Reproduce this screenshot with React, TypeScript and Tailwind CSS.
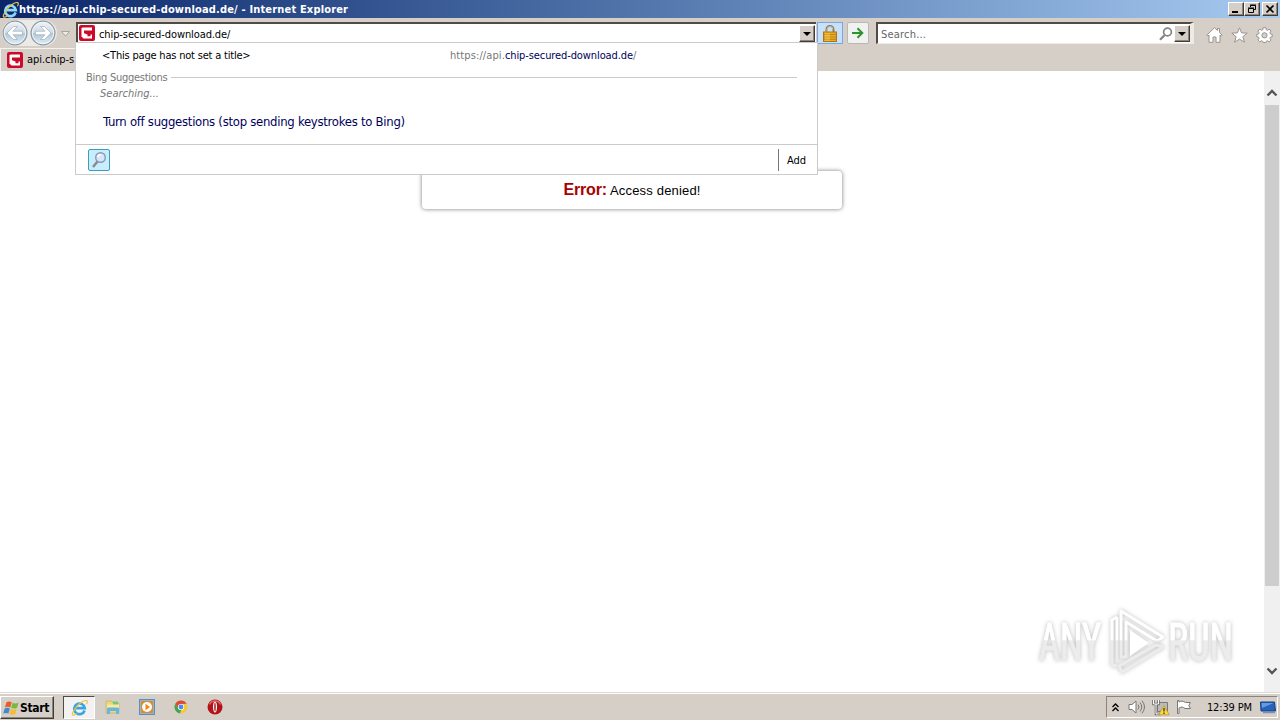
import type { ReactNode } from "react";

const ui = "font-['DejaVu_Sans_Condensed','DejaVu_Sans',sans-serif] [font-stretch:condensed]";
const raised =
  "bg-[#d6cfc8] border border-t-white border-l-white border-r-[#403c38] border-b-[#403c38] shadow-[inset_-1px_-1px_0_#8c857e]";

function IeLogo({ size, color = "#3aa5e4" }: { size: number; color?: string }) {
  return (
    <svg width={size} height={size} viewBox="0 0 16 16" fill="none" className="shrink-0">
      <path d="M12.8 10.8A5 5 0 1 1 13 8.6H4.5" stroke={color} strokeWidth="2.5" />
      <path d="M4 9C7 4.5 12 .7 14.7 1.5c1 .4.7 2-.2 3.4" stroke="#f0c43c" strokeWidth="1.1" />
      <path d="M4.2 8.7C1.4 12.2.4 15 2 15.2c1 .1 2.4-.6 3.7-1.5" stroke="#f0c43c" strokeWidth="1.1" />
    </svg>
  );
}

function ChipIcon() {
  return (
    <svg width="16" height="16" viewBox="0 0 16 16" className="shrink-0">
      <rect width="16" height="16" rx="2" fill="#cc0a28" />
      <path d="M3.5 2.500H13v11H4.5l-2-2v-8z" fill="#fff" />
      <path d="M5 5.500h8.500v4h-2v1.800H8.500V9.500L5 8.300z" fill="#cc0a28" />
    </svg>
  );
}

function NavArrow({ flip = false }: { flip?: boolean }) {
  return (
    <svg width="26" height="26" viewBox="0 0 26 26" className="shrink-0">
      <defs>
        <linearGradient id="orb" x1="0" y1="0" x2="0" y2="1">
          <stop offset="0" stopColor="#f1f5f8" />
          <stop offset=".48" stopColor="#cfdae4" />
          <stop offset=".52" stopColor="#b3c5d4" />
          <stop offset="1" stopColor="#dff2f7" />
        </linearGradient>
      </defs>
      <circle cx="13" cy="13" r="11.9" fill="url(#orb)" stroke="#8798a8" strokeWidth="1.2" />
      <circle cx="13" cy="13" r="10.7" fill="none" stroke="#f2f6f9" />
      <path
        transform={flip ? "translate(26 0) scale(-1 1)" : undefined}
        d="M5 13l6.500-6.500h4L11 11.200h9.500v3.600H11l4.500 4.700h-4z"
        fill="#fff"
        stroke="#9dadbc"
        strokeWidth=".7"
      />
    </svg>
  );
}

function DropButton() {
  return (
    <div className={`flex h-[17px] w-4 shrink-0 items-center justify-center ${raised}`}>
      <svg width="8" height="4" viewBox="0 0 8 4">
        <path d="M0 0h8L4 4z" fill="#000" />
      </svg>
    </div>
  );
}

function WindowButton({ children }: { children: ReactNode }) {
  return (
    <div className={`flex h-[14px] w-4 items-center justify-center ${raised}`}>
      <svg width="12" height="10" viewBox="0 0 12 10" fill="none" stroke="#000">
        {children}
      </svg>
    </div>
  );
}

function TitleBar() {
  return (
    <div className="flex h-[18px] shrink-0 items-center bg-linear-to-r from-[#0b2569] to-[#a6caf0] pr-[2px] pl-[2px]">
      <IeLogo size={17} color="#8bd8fa" />
      <div className="w-[340px] pt-[2px] text-[11px] font-bold tracking-[0.17px] whitespace-nowrap text-white">
        https://api.chip-secured-download.de/ - Internet Explorer
      </div>
      <div className="ml-auto flex">
        <WindowButton>
          <path d="M2 8h6" strokeWidth="2" />
        </WindowButton>
        <WindowButton>
          <path d="M4.5 3V1.500h5v4H8M4 1h6" />
          <path d="M2.500 4.500h5v4h-5zM2 4h6" />
        </WindowButton>
        <div className="ml-[2px]">
          <WindowButton>
            <path d="M2.500 1.500l7 7M9.500 1.500l-7 7" strokeWidth="1.7" />
          </WindowButton>
        </div>
      </div>
    </div>
  );
}

function NavBar() {
  return (
    <div className="flex h-[30px] shrink-0 items-start pt-[4px]">
      <div className="mt-[-2px] ml-[2px] flex w-[55px] gap-[2px] rounded-full bg-[#ece9e6]">
        <NavArrow />
        <NavArrow flip />
      </div>
      <svg width="9" height="6" viewBox="0 0 9 6" className="mt-[9px] ml-1 shrink-0">
        <path d="M.5.500h8L4.500 5z" fill="#eeebe8" stroke="#aaa49d" />
      </svg>
      <div className="ml-[6px] flex h-[22px] w-[740px] items-start border-t-2 border-l-2 border-[#514b46] bg-white pt-[1px] pr-[1px] pl-[1px]">
        <ChipIcon />
        <div className="mt-[1px] ml-[4px] text-[11px] leading-[17px] tracking-[-0.1px] text-black">
          chip-secured-download.de/
        </div>
        <div className="ml-auto">
          <DropButton />
        </div>
      </div>
      <div className="ml-[1px] flex h-[22px] w-[26px] items-center justify-center border border-[#77a7e5] bg-[#c9e0fb]">
        <svg width="14" height="17" viewBox="0 0 14 17">
          <path d="M3.500 8V4.500a3.500 3.500 0 0 1 7 0V8" fill="none" stroke="#8b7c52" strokeWidth="2" />
          <path d="M4 8V4.500a3 3 0 0 1 6 0" fill="none" stroke="#e7dfc2" strokeWidth=".7" />
          <rect x=".5" y="7" width="13" height="9.500" fill="#e9ac22" stroke="#ad7510" />
          <path d="M1 9.500h12M1 12h12M1 14.300h12" stroke="#bd8416" />
          <path d="M2 8h5v8H2z" fill="#ffd65b" opacity=".35" />
        </svg>
      </div>
      <div className="ml-[4px] flex h-[22px] w-[22px] items-center justify-center rounded-[2px] border border-[#bab8b7] bg-[#f1f1f1]">
        <svg width="12" height="12" viewBox="0 0 12 12" fill="none" stroke="#2a952c" strokeWidth="2">
          <path d="M0 6h10M5.500 1.200L10.300 6l-4.800 4.800" />
        </svg>
      </div>
      <div className="ml-[7px] flex h-[22px] w-[318px] items-start border-t-2 border-r-4 border-b border-l-2 border-t-[#514b46] border-r-[#eeeae6] border-b-[#eeeae6] border-l-[#514b46] bg-white pt-[1px] pl-[3px]">
        <div className="mt-[1px] text-[11px] leading-[17px] tracking-[0.2px] text-[#666]">Search...</div>
        <svg width="14" height="14" viewBox="0 0 14 14" fill="none" stroke="#858585" className="mt-[2px] ml-auto">
          <circle cx="8.500" cy="5" r="3.900" strokeWidth="1.700" />
          <path d="M5.500 8.200L1 12.800" strokeWidth="2.200" />
        </svg>
        <div className="ml-[1px]">
          <DropButton />
        </div>
      </div>
      <div className="mt-[5px] ml-[12px] flex gap-[8px]">
        <svg width="17" height="16" viewBox="0 0 17 16" fill="#fff" stroke="#99948f">
          <path d="M.800 8.200L8.500.700l3 2.800V1.500h2v4l2.800 2.700-1 1-1.300-1.100v7.200h-4V10h-3v5.300H3V8.100L1.800 9.200z" />
        </svg>
        <svg width="17" height="16" viewBox="0 0 17 16" fill="#fff" stroke="#99948f">
          <path d="M8.500.800l2.100 5.100 5.600.200-4.300 3.600 1.500 5.500-4.900-3.100-4.900 3.100 1.500-5.500L.800 6.100l5.600-.200z" />
        </svg>
        <svg width="17" height="16" viewBox="0 0 16 16" fill="#fff" stroke="#99948f">
          <path d="M6.600.700h2.800l.3 2 1.300.600 1.700-1.200 1.900 1.900-1.200 1.700.6 1.300 1.700.2v2.600l-1.700.3-.6 1.300 1.200 1.600-1.900 1.900-1.700-1.200-1.300.600-.3 1.200H6.600l-.3-1.200-1.300-.6-1.700 1.200L1.400 13l1.200-1.600-.6-1.300-1.700-.3V7.200L2 7l.600-1.300L1.400 4l1.900-1.900L5 3.300l1.300-.6z" />
          <circle cx="8" cy="8.300" r="2.600" fill="#d6cfc8" />
        </svg>
      </div>
    </div>
  );
}

function SuggestionPopup() {
  return (
    <div className="absolute top-[42px] left-[75px] flex h-[133px] w-[743px] flex-col border border-[#cbcbcb] bg-white">
      <div className="flex h-[25px] items-center pt-[1px] pl-[26px] text-[11px]">
        <div className="w-[348px] tracking-[-0.2px] text-black">&lt;This page has not set a title&gt;</div>
        <div className="text-[#777]">
          <span className="tracking-[0.1px]">https://api.</span>
          <span className="tracking-[-0.1px] text-[#00005c]">chip-secured-download.de</span>/
        </div>
      </div>
      <div className="flex h-[18px] items-center pr-[20px] pl-[10px] text-[11px] text-[#777]">
        <div className="w-[85px] pt-[2px] tracking-[-0.27px] whitespace-nowrap">Bing Suggestions</div>
        <div className="h-px flex-1 bg-[#cbcbcb]" />
      </div>
      <div className="mt-[1px] h-[14px] pl-[24px] text-[11px] leading-[14px] text-[#777] italic">Searching...</div>
      <div className="mt-[11px] pl-[27px] text-[13px] leading-[19px] tracking-[-0.28px] text-[#00005c]">
        Turn off suggestions (stop sending keystrokes to Bing)
      </div>
      <div className="mt-auto flex h-[30px] items-center border-t border-[#cbcbcb] pl-[12px]">
        <div className="flex h-[22px] w-[22px] items-center justify-center rounded-[2px] border border-[#3b9bc5] bg-[#c8edfc]">
          <svg width="16" height="18" viewBox="0 0 16 18" fill="none">
            <path d="M6.500 10.500L2 16" stroke="#858b91" strokeWidth="2.500" />
            <circle cx="9.500" cy="6.500" r="4.800" fill="#d6e6fb" stroke="#8999b2" strokeWidth="1.400" />
            <path d="M6.800 6a3 3 0 0 1 3-2.500" stroke="#fff" strokeWidth="1.500" />
          </svg>
        </div>
        <div className="ml-auto flex h-[22px] w-[39px] items-center border-l border-[#777] pt-[3px] pl-[8px] text-[11px] text-black">
          Add
        </div>
      </div>
    </div>
  );
}

function Watermark() {
  return (
    <svg
      width="210"
      height="76"
      viewBox="0 0 210 76"
      className="absolute right-[39px] bottom-[14px] overflow-visible drop-shadow-[0_0_2px_#bbbbbb]"
    >
      <defs>
        <linearGradient id="fade" gradientUnits="userSpaceOnUse" x1="0" y1="0" x2="0" y2="76">
          <stop offset=".5" stopColor="#fff" />
          <stop offset=".51" stopColor="#ececec" />
        </linearGradient>
      </defs>
      <g
        fill="url(#fade)"
        stroke="url(#fade)"
        strokeWidth="1.200"
        className="font-['Liberation_Sans_Narrow','Roboto',sans-serif] text-[52px] leading-none"
      >
        <text x="8" y="57.500" textLength="62" lengthAdjust="spacingAndGlyphs">ANY</text>
        <text x="137" y="57.500" textLength="65" lengthAdjust="spacingAndGlyphs">RUN</text>
      </g>
      <g fill="none" stroke="url(#fade)" strokeWidth="3" strokeLinejoin="round">
        <path d="M90 55V9l42 26-6 4-31-19v35z" />
        <path d="M86 15l-5 3v45l5 1M86 15v44" />
        <path d="M88 64l37-21 7 2-41 25z" />
        <path d="M99 28v26l19-13z" fill="#fff" stroke="none" />
      </g>
    </svg>
  );
}

function Page() {
  return (
    <div className="relative flex min-h-0 flex-1 justify-between bg-white">
      <div className="flex flex-1 justify-center pt-[100px]">
        <div className="h-[38px] w-[420px] rounded-[4px] bg-white pt-[8px] text-center font-['Liberation_Sans',Arial,sans-serif] text-[13px] leading-[22px] tracking-[0.17px] text-black shadow-[0_0_4px_#777]">
          <span className="text-[16px] font-bold tracking-[-0.15px] text-[#a90000]">Error:</span> Access denied!
        </div>
      </div>
      <div className="flex w-4 shrink-0 flex-col items-center bg-[#f0f0f0]">
        <svg width="12" height="8" viewBox="0 0 12 8" className="mt-[18px]" fill="none" stroke="#555" strokeWidth="2.300">
          <path d="M1.500 6.500L6 2l4.500 4.500" />
        </svg>
        <div className="mt-[8px] h-[481px] w-[14px] bg-[#cdcdcd]" />
        <svg width="12" height="8" viewBox="0 0 12 8" className="mt-auto mb-[17px]" fill="none" stroke="#555" strokeWidth="2.300">
          <path d="M1.500 1.500L6 6l4.500-4.500" />
        </svg>
      </div>
      <Watermark />
    </div>
  );
}

function TaskBar() {
  return (
    <div className="flex h-[28px] shrink-0 items-start border-t border-[#ddd8d2] pt-[3px] shadow-[inset_0_1px_0_#fff]">
      <div className={`flex h-[23px] w-[54px] items-center pl-[2px] ${raised}`}>
        <svg width="17" height="16" viewBox="0 0 17 16" className="shrink-0">
          <path d="M3.500 2.200C5.500.900 7 1.500 8.700 2.300L7.200 7.500c-1.700-.9-3.500-1.100-5.200 0z" fill="#e85d24" />
          <path d="M9.600 2.700c2 1 4 .9 6-.2l-1.500 5.200c-1.900 1.100-4.100 1.100-6 .1z" fill="#79b943" />
          <path d="M1.700 8.400c1.800-1 3.500-.9 5.200.1l-1.500 5.100c-1.800-.9-3.500-1-5.200 0z" fill="#3f8ad5" />
          <path d="M7.800 8.900c1.900 1 4.100 1 6-.1l-1.500 5.100c-2 1.100-4 1.100-6 .1z" fill="#f3bd34" />
        </svg>
        <div className="text-[12px] font-bold tracking-[-0.35px] text-black">Start</div>
      </div>
      <div className="ml-[9px] flex h-[23px] w-[32px] items-center justify-center border border-t-[#514b46] border-r-white border-b-white border-l-[#514b46] bg-[#f4f2f0]">
        <IeLogo size={17} />
      </div>
      <div className="mt-[3px] ml-[10px] flex gap-[18px]">
        <svg width="16" height="16" viewBox="0 0 16 16">
          <path d="M1 2h6l1 2h6v10H1z" fill="#eed47b" stroke="#c9ad5e" strokeWidth=".7" />
          <path d="M8 2.500h5V6H8z" fill="#76c878" />
          <path d="M2 5.500h12V10H2z" fill="#fae9a0" />
          <path d="M2 15v-5c0-1 .5-1.500 1.500-1.500h9c1 0 1.500.5 1.500 1.500v5h-3v-3H5v3z" fill="#66b7df" />
        </svg>
        <svg width="16" height="16" viewBox="0 0 16 16">
          <rect x=".5" y=".5" width="15" height="15" fill="#87b9e2" stroke="#578fc0" />
          <rect x="2" y="2" width="12" height="12" fill="#ef8718" />
          <circle cx="8" cy="8" r="5" fill="#fff" />
          <path d="M6.500 4.800L11 8l-4.500 3.200z" fill="#ef8718" />
        </svg>
        <svg width="16" height="16" viewBox="0 0 16 16">
          <circle cx="8" cy="8" r="6.500" fill="#f7c933" />
          <path d="M2.300 4.800A6.500 6.500 0 0 1 13.700 4.800L8 5 5 9.500z" fill="#df4937" />
          <path d="M2.300 4.800L5.200 9.700l2.800 1.300-1 3.400A6.500 6.500 0 0 1 2.300 4.800z" fill="#3ca55a" />
          <circle cx="8" cy="8" r="3.100" fill="#fff" />
          <circle cx="8" cy="8" r="2.400" fill="#4a8bf0" />
        </svg>
        <svg width="16" height="16" viewBox="0 0 16 16">
          <circle cx="8" cy="8" r="7.500" fill="#b51217" />
          <path d="M2.500 5.500a6 6 0 0 1 11 0" stroke="#de666b" strokeWidth="1.500" fill="none" />
          <ellipse cx="8" cy="8" rx="2" ry="5.500" fill="#fff" />
          <ellipse cx="8" cy="8" rx=".700" ry="4.500" fill="#93080d" />
        </svg>
      </div>
      <div className="mr-[2px] ml-auto flex h-[22px] w-[172px] items-center border border-t-[#8c857e] border-r-white border-b-white border-l-[#8c857e] pl-[5px]">
        <svg width="7" height="9" viewBox="0 0 7 9" fill="none" stroke="#000" strokeWidth="1.300">
          <path d="M.500 4l3-3 3 3M.500 8l3-3 3 3" />
        </svg>
        <svg width="18" height="16" viewBox="0 0 18 16" fill="#fff" stroke="#777" className="ml-[9px]">
          <path d="M1 5.500h3L8 2v12l-4-3.500H1z" />
          <path d="M10 5.500q2 2.500 0 5M12 3.500q3.500 4.500 0 9M14 1.700q5 6.300 0 12.600" fill="none" />
        </svg>
        <svg width="18" height="17" viewBox="0 0 18 17" className="ml-[6px]">
          <path d="M5.500 3.500h10v9h-10z" fill="#bbb" stroke="#777" />
          <path d="M1.500 1v4h5V1M4 5v10h5" fill="none" stroke="#666" strokeWidth="2.500" />
          <path d="M1.500 1v4h5V1M4 5v10h5" fill="none" stroke="#fff" />
          <path d="M12 6.500l5.300 9.300H6.700z" fill="#ffd83d" stroke="#b89322" strokeWidth=".7" />
          <path d="M12 9v3.500M12 13.500V15" stroke="#333" strokeWidth="1.300" />
        </svg>
        <svg width="16" height="16" viewBox="0 0 16 16" fill="#fff" stroke="#777" className="ml-[6px]">
          <path d="M1.500 1.500v13h1.500V9c2.500-1.500 4-1 6 .5h5.500L12.800 6.500l1.500-3H9.500C7 1.800 5 1.800 3 3V1.500z" />
        </svg>
        <div className="ml-[15px] pt-[2px] text-[11px] tracking-[-0.17px] whitespace-nowrap text-black">12:39 PM</div>
        <svg width="16" height="15" viewBox="0 0 16 15" className="mr-[1px] ml-auto shrink-0">
          <path d="M.500 2h14l1 9H1z" fill="#2564ba" stroke="#173f7c" />
          <path d="M1.500 3h12L2 8z" fill="#669be0" />
          <path d="M3 12.500h12" stroke="#7692b4" strokeWidth="1.500" />
        </svg>
      </div>
    </div>
  );
}

function App() {
  return (
    <div className={`relative flex h-[720px] w-[1280px] flex-col overflow-hidden bg-[#d6cfc8] ${ui}`}>
      <TitleBar />
      <NavBar />
      <div className="flex h-[23px] shrink-0">
        <div className="flex w-[75px] items-center border-t border-l border-[#f4f1ee] pl-[6px]">
          <ChipIcon />
          <div className="ml-[4px] shrink-0 pt-[1px] text-[11px] tracking-[-0.05px] whitespace-nowrap text-black">
            api.chip-s
          </div>
        </div>
      </div>
      <Page />
      <TaskBar />
      <SuggestionPopup />
    </div>
  );
}

export default App;
